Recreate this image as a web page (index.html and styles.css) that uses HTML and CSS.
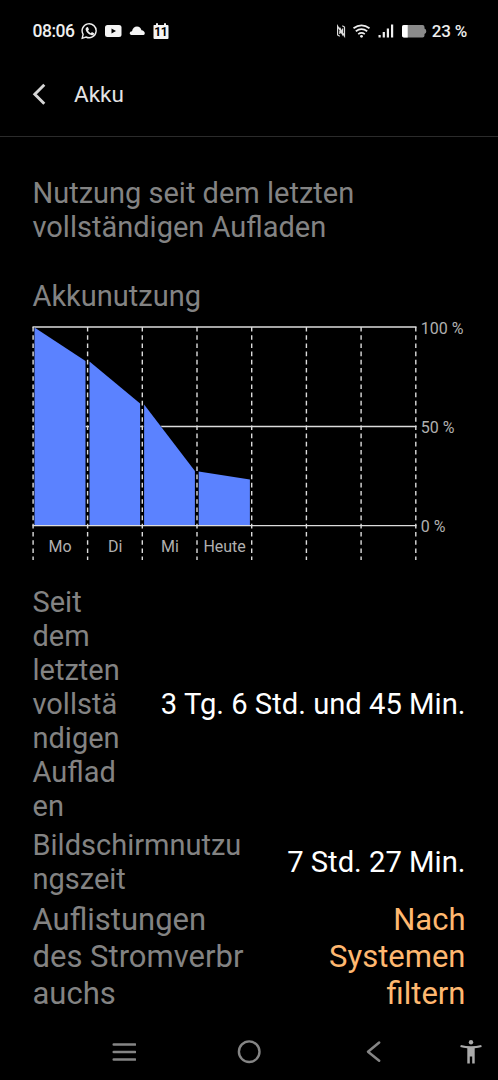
FILE: index.html
```
<!DOCTYPE html>
<html lang="de">
<head>
  <meta charset="UTF-8" />
  <title>Akku</title>
  <link rel="stylesheet" href="styles.css">
</head>
<body>

  <!-- Status bar -->
  <div class="status-bar">
    <span class="clock">08:06</span>
    <svg class="status-left" width="90" height="18" viewBox="0 0 90 18">
      <path d="M2.100 12.300A7 7 0 1 1 5 15L1.200 16.300Z" fill="none" stroke="#eee" stroke-width="1.400"/>
      <path d="M5.700 5.200l1.200-.2 1.100 2.400-.9 1.100c.6 1.300 1.500 2.100 2.800 2.700l1-1.100 2.200 1.100c0 1.500-1.100 2.200-2.400 2C7.600 12.700 5 10 4.600 7.300c0-.8.4-1.700 1.100-2.100z" fill="#eee"/>
      <rect x="24" y="3" width="16.500" height="12" rx="2.500" fill="#f4f4f4"/>
      <path d="M30.500 6.500v5l4.500-2.500z" fill="#000"/>
      <path d="M50.500 13C48 13 48.200 9.300 51 9.300C51.500 6.500 53.500 4.500 56 4.500C58.300 4.500 60 6 60.500 8.200C64.500 8.500 64.500 13 62.500 13Z" fill="#f4f4f4"/>
      <path d="M73 3h2V1.200h2V3h6V1.200h2V3h1.500q1 0 1 1v12q0 1-1 1h-13q-1 0-1-1V4q0-1 .5-1z" fill="#f4f4f4"/>
      <text x="79.700" y="14.300" class="date">11</text>
    </svg>
    <svg class="status-right" width="92" height="18" viewBox="0 0 92 18">
      <path d="M3.800 14.300L1.600 13V4.200L6.600 12.500V6.500M3.800 12V6M6.300 3.800L8.500 5V14L3.600 5.500" fill="none" stroke="#ddd" stroke-width="1.200"/>
      <g fill="none" stroke="#eee" stroke-width="1.700">
        <path d="M17.500 6.300Q25.500 .3 33.500 6.300"/>
        <path d="M19.800 9.300Q25.500 5 31.200 9.300"/>
        <path d="M22.200 12.100Q25.500 9.700 28.800 12.100"/>
      </g>
      <circle cx="25.500" cy="14.300" r="1.400" fill="#eee"/>
      <path d="M42.500 13h2.200v2.500h-2.200zM46.700 10h2.200v5.500h-2.200zM50.800 6.500h2.200v9h-2.200zM55 2.500h2.200v13H55z" fill="#eee"/>
      <path d="M68 3h18.500q2 0 2 2v1.500q1.800.5 1.800 2.700t-1.800 2.700v1.500q0 2-2 2H68q-2 0-2-2V5q0-2 2-2z" fill="#8a8a8a"/>
      <path d="M71.700 3v12.400H68q-2 0-2-2V5q0-2 2-2z" fill="#fff"/>
    </svg>
    <span class="percent">23 %</span>
  </div>

  <!-- Title bar -->
  <div class="title-bar">
    <svg width="14" height="22" viewBox="0 0 14 22">
      <path d="M12.300 1.800L2.800 11.300L12.300 20.800" fill="none" stroke="#d6d6d6" stroke-width="2.900"/>
    </svg>
    <h1>Akku</h1>
  </div>

  <div class="content">
    <h2 class="summary">Nutzung seit dem letzten<br>vollständigen Aufladen</h2>
    <h2 class="chart-title">Akkunutzung</h2>

    <!-- Battery chart -->
    <svg class="chart" width="434" height="240" viewBox="0 0 434 240">
      <g class="h-lines">
        <path d="M.5 7H384.500M.5 106.500H384.500"/>
      </g>
      <g class="area-gaps">
        <path d="M2.500 8L53 41V205H2.500z"/>
        <path d="M57.500 41.500L107.700 83.500V205H57.500z"/>
        <path d="M111.900 84.500L162.500 150.500V205H111.900z"/>
        <path d="M166.500 152L217.700 159.500V205H166.500z"/>
      </g>
      <g class="areas">
        <path d="M2.500 7.500L53.500 41V205H2.500z"/>
        <path d="M57.500 41.500L108.100 83.500V205H57.500z"/>
        <path d="M112.100 84.500L162.900 151V205H112.100z"/>
        <path d="M166.700 151.500L217.900 159.500V205H166.700z"/>
      </g>
      <g class="h-lines">
        <path d="M.5 205.600H384.500"/>
      </g>
      <g class="v-lines">
        <path d="M1.100 7V240M55.600 7V240M110.300 7V240M165 7V240M219.700 7V240M274.400 7V240M329.100 7V240M383.800 7V240"/>
      </g>
      <g class="days">
        <text x="28.100" y="232">Mo</text>
        <text x="83.200" y="232">Di</text>
        <text x="138" y="232">Mi</text>
        <text x="192.600" y="232">Heute</text>
      </g>
      <g class="levels">
        <text x="388.800" y="13.500">100 %</text>
        <text x="388.800" y="112.800">50 %</text>
        <text x="388.800" y="212">0 %</text>
      </g>
    </svg>

    <!-- Usage details -->
    <div class="row">
      <span class="label">Seit<br>dem<br>letzten<br>vollstä<br>ndigen<br>Auflad<br>en</span>
      <span class="value">3 Tg. 6 Std. und 45 Min.</span>
    </div>
    <div class="row">
      <span class="label">Bildschirmnutzu<br>ngszeit</span>
      <span class="value">7 Std. 27 Min.</span>
    </div>
    <div class="row filter-row">
      <span class="label">Auflistungen<br>des Stromverbr<br>auchs</span>
      <span class="value filter">Nach<br>Systemen<br>filtern</span>
    </div>
  </div>

  <!-- Navigation bar -->
  <div class="nav-bar">
    <svg width="24" height="24" viewBox="0 0 24 24">
      <path d="M1.700 4.500H23.200M1.700 12H23.200M1.700 19.500H23.200" fill="none" stroke="#858585" stroke-width="2.500" stroke-linecap="round"/>
    </svg>
    <svg width="24" height="24" viewBox="0 0 24 24">
      <circle cx="12.200" cy="11.700" r="10.300" fill="none" stroke="#858585" stroke-width="2.400"/>
    </svg>
    <svg width="24" height="24" viewBox="0 0 24 24">
      <path d="M17.200 2.500L6 11.700L17.200 20.800" fill="none" stroke="#858585" stroke-width="2.500" stroke-linecap="round" stroke-linejoin="round"/>
    </svg>
    <svg class="access" width="22" height="24" viewBox="0 0 22 24">
      <circle cx="11" cy="2.200" r="2.200" fill="#aaa"/>
      <path d="M.8 5Q11 7.700 21.200 5L21.700 7Q18.500 8 14.700 8.300V23.500H12.200V16.500H9.800V23.500H7.300V8.300Q3.500 8 .3 7z" fill="#aaa"/>
    </svg>
  </div>

</body>
</html>
```

FILE: styles.css
```
    * {
      margin: 0;
      padding: 0;
      box-sizing: border-box;
    }

    body {
      font-family: Roboto, sans-serif;
      background-color: #000;
      color: #fff;
      height: 1080px;
      display: flex;
      flex-direction: column;
      overflow: hidden;
    }

    svg {
      display: block;
      flex: none;
    }

    /* Status bar */
    .status-bar {
      height: 62px;
      padding: 0 31px 0 32.5px;
      display: flex;
      align-items: center;
      font-size: 17.5px;
      font-weight: 500;
      letter-spacing: -0.5px;
      color: #eee;
      white-space: nowrap;
    }

    .clock {
      width: 48.5px;
    }

    .status-right {
      margin-left: auto;
      margin-right: 4px;
    }

    .percent {
      letter-spacing: -0.2px;
      font-size: 17px;
    }

    .date {
      font-size: 12px;
      font-weight: 700;
      text-anchor: middle;
      fill: #000;
    }

    /* Title bar */
    .title-bar {
      height: 75px;
      padding: 0 32px 10px;
      display: flex;
      align-items: center;
      gap: 28px;
      border-bottom: 1px solid #2b2b2b;
    }

    .title-bar h1 {
      font-size: 22.5px;
      font-weight: 400;
      color: #e4e4e4;
    }

    /* Main content */
    .content {
      flex: 1;
      padding: 39px 32.5px 0;
      font-size: 29px;
      line-height: 34px;
    }

    .content h2 {
      font-size: 29px;
      font-weight: 400;
      color: #838383;
    }

    .chart-title {
      margin-top: 35px;
    }

    /* Chart */
    .chart {
      margin-top: 7px;
      margin-bottom: 25px;
      margin-left: -0.5px;
      overflow: visible;
    }

    .h-lines {
      stroke: #dcdcdc;
      stroke-width: 1.4;
    }

    .area-gaps {
      fill: #000;
      stroke: #000;
      stroke-width: 1;
    }

    .areas {
      fill: #5b82ff;
    }

    .v-lines {
      fill: none;
      stroke: #dcdcdc;
      stroke-width: 1.4;
      stroke-dasharray: 4.6 3.6;
    }

    .days,
    .levels {
      font-size: 16px;
      fill: #b0b0b0;
    }

    .days {
      text-anchor: middle;
    }

    /* Detail rows */
    .row {
      display: flex;
      justify-content: space-between;
      align-items: center;
      margin-bottom: 5px;
      white-space: nowrap;
    }

    .label {
      color: #838383;
    }

    .value {
      font-size: 29.2px;
      text-align: right;
    }

    .filter-row {
      font-size: 31px;
      line-height: 37px;
    }

    .filter {
      font-size: 31px;
      color: #ffb870;
    }

    /* Navigation bar */
    .nav-bar {
      height: 57px;
      padding-left: 112px;
      padding-right: 16px;
      display: flex;
      align-items: center;
    }

    .nav-bar svg + svg {
      margin-left: 101px;
    }

    .nav-bar svg.access {
      margin-left: auto;
    }
```
